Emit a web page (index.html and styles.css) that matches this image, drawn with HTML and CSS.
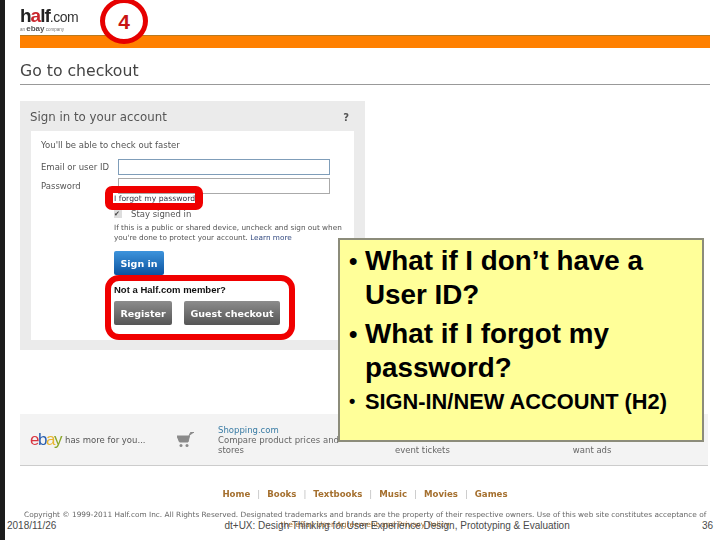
FILE: index.html
```html
<!DOCTYPE html>
<html lang="en">
<head>
  <meta charset="UTF-8">
  <title>Go to checkout</title>
  <link rel="stylesheet" href="styles.css">
</head>
<body>
  <div class="slide">
    <div class="page">
      <div class="logo">
        <div class="logo-name"><b>h<span class="logo-a">a</span>lf</b>.com</div>
        <div class="logo-sub">an <b>ebay</b> company</div>
      </div>
      <div class="orange-bar"></div>
      <h1>Go to checkout</h1>

      <div class="panel">
        <div class="panel-head">
          <span>Sign in to your account</span>
          <span class="help">?</span>
        </div>
        <div class="panel-body">
          <p class="intro">You'll be able to check out faster</p>
          <div class="field">
            <label>Email or user ID</label>
            <div class="input"></div>
          </div>
          <div class="field field-pass">
            <label>Password</label>
            <div class="input input-pass"></div>
          </div>
          <div class="form-col">
            <a class="forgot">I forgot my password</a>
            <div class="stay"><span class="check">✔</span>Stay signed in</div>
            <p class="small">If this is a public or shared device, uncheck and sign out when you're done to protect your account. <a>Learn more</a></p>
            <button class="btn-blue">Sign in</button>
            <div class="member">Not a Half.com member?</div>
            <div class="btn-row">
              <button class="btn-grey btn-register">Register</button>
              <button class="btn-grey btn-guest">Guest checkout</button>
            </div>
          </div>
        </div>
      </div>

      <div class="band">
        <div class="ebay-logo"><span class="e">e</span><span class="b">b</span><span class="a">a</span><span class="y">y</span></div>
        <div class="band-more">has more for you...</div>
        <svg class="cart" width="18" height="16" viewBox="0 0 18 16">
          <path d="M0 4h12.500l-1.500 6H2.500zM12 4l1.500-3.500H17" fill="#8a8a8a" stroke="#8a8a8a" stroke-width="1"/>
          <circle cx="4" cy="13.500" r="1.500" fill="#8a8a8a"/>
          <circle cx="10" cy="13.500" r="1.500" fill="#8a8a8a"/>
        </svg>
        <div class="band-item">
          <a>Shopping.com</a><br>Compare product prices and<br>stores
        </div>
        <div class="band-item band-tickets">event tickets</div>
        <div class="band-item band-ads">want ads</div>
      </div>

      <div class="site-nav">
        <a>Home</a><i>|</i><a>Books</a><i>|</i><a>Textbooks</a><i>|</i><a>Music</a><i>|</i><a>Movies</a><i>|</i><a>Games</a>
      </div>
      <p class="copyright">Copyright © 1999-2011 Half.com Inc. All Rights Reserved. Designated trademarks and brands are the property of their respective owners. Use of this web site constitutes acceptance of</p>
      <p class="copyright-2">the eBay User Agreement and Privacy Policy</p>
    </div>

    <div class="edge"></div>

    <!-- slide annotations on top of the screenshot -->
    <div class="step">4</div>
    <div class="mark mark-forgot"></div>
    <div class="mark mark-member"></div>

    <div class="note">
      <ul>
        <li>What if I don’t have a User ID?</li>
        <li>What if I forgot my password?</li>
        <li class="note-small">SIGN-IN/NEW ACCOUNT (H2)</li>
      </ul>
    </div>

    <div class="slide-foot">
      <span>2018/11/26</span>
      <span class="foot-title">dt+UX: Design Thinking for User Experience Design, Prototyping &amp; Evaluation</span>
      <span>36</span>
    </div>
  </div>
</body>
</html>
```

FILE: styles.css
```css
html, body {
  margin: 0;
  padding: 0;
  background: #fff;
}

.slide {
  position: relative;
  width: 720px;
  height: 540px;
  overflow: hidden;
  font-family: 'Liberation Sans', sans-serif;
}

.edge {
  position: absolute;
  left: 0;
  top: 0;
  bottom: 0;
  width: 5px;
  background: #1c1c1c;
}

.page {
  padding: 7px 10px 0 20px;
  font-family: 'DejaVu Sans', sans-serif;
  color: #555;
  filter: blur(0.4px);
}

/* logo */
.logo {
  height: 28px;
  font-family: 'Liberation Sans', sans-serif;
}

.logo-name {
  font-size: 14px;
  line-height: 17px;
  letter-spacing: -0.5px;
  color: #333;
}

.logo-name b {
  font-size: 19px;
  letter-spacing: -1px;
  color: #222;
}

.logo-a {
  color: #c9252c;
}

.logo-sub {
  font-size: 4.500px;
  line-height: 6px;
  color: #777;
}

.logo-sub b {
  font-size: 8px;
  color: #555;
}

.orange-bar {
  height: 13px;
  background: #ff8000;
  border-top: 1px solid #b87a20;
  box-sizing: border-box;
}

h1 {
  margin: 0 0 16px;
  padding: 12px 0 3px;
  height: 21px;
  font-size: 15.700px;
  line-height: 21px;
  font-weight: normal;
  color: #444;
  border-bottom: 1px solid #999;
}

/* sign in panel */
.panel {
  width: 345px;
  height: 249px;
  box-sizing: border-box;
  padding: 0 11px 0 11px;
  background: #ebebeb;
}

.panel-head {
  display: flex;
  justify-content: space-between;
  align-items: center;
  height: 30px;
  padding-top: 2px;
  margin-left: -1px;
  box-sizing: border-box;
  font-size: 11.800px;
  color: #555;
}

.help {
  margin-right: 5px;
  font-size: 10px;
  font-weight: bold;
}

.panel-body {
  height: 209px;
  box-sizing: border-box;
  padding: 9px 10px;
  background: #fff;
  font-size: 8.500px;
}

.intro {
  margin: 0 0 9px;
  line-height: 10px;
}

.field {
  display: flex;
  align-items: center;
  gap: 9px;
  height: 16px;
  margin-bottom: 3px;
}

.field label {
  width: 68px;
}

.input {
  width: 210px;
  height: 14px;
  border: 1px solid #7f9db9;
  background: #fff;
}

.input-pass {
  border-color: #aaa;
}

.field-pass {
  margin-bottom: 0;
}

.form-col {
  margin-left: 73px;
  padding-top: 0;
}

.forgot {
  display: block;
  height: 12px;
  line-height: 9px;
  font-size: 7.700px;
  color: #334;
}

.stay {
  display: flex;
  align-items: center;
  height: 16px;
  font-size: 8.500px;
}

.check {
  width: 8px;
  height: 8px;
  margin-right: 9px;
  background: #ddd;
  font-size: 7px;
  line-height: 8px;
  color: #444;
}

.small {
  margin: 1px 0 9px;
  font-size: 7.300px;
  line-height: 9.500px;
  width: 240px;
  color: #555;
}

.small a {
  color: #334a80;
}

button {
  border: none;
  padding: 0;
  border-radius: 2px;
  color: #fff;
  font-family: 'DejaVu Sans', sans-serif;
  font-size: 9.500px;
  font-weight: bold;
}

.btn-blue {
  display: block;
  width: 50px;
  height: 24px;
  background: linear-gradient(#3d94dc, #0c53a0);
}

.member {
  margin-top: 9px;
  font-family: 'Liberation Sans', sans-serif;
  font-size: 9.500px;
  font-weight: bold;
  line-height: 11px;
  color: #111;
}

.btn-row {
  display: flex;
  gap: 12px;
  margin-top: 6px;
}

.btn-grey {
  height: 24px;
  background: linear-gradient(#8c8c8c, #555);
}

.btn-register {
  width: 58px;
}

.btn-guest {
  width: 96px;
}

/* ebay band */
.band {
  display: flex;
  align-items: center;
  width: 688px;
  height: 52px;
  margin-top: 64px;
  padding-left: 10px;
  background: #f3f3f3;
  border-bottom: 1px solid #ccc;
  font-size: 8.500px;
  box-sizing: border-box;
  line-height: 10px;
}

.ebay-logo {
  width: 35px;
  font-family: 'Liberation Sans', sans-serif;
  font-size: 17px;
  letter-spacing: -1.500px;
}

.ebay-logo .e { color: #d9343f; }
.ebay-logo .b { color: #2a5fb0; }
.ebay-logo .a { color: #e8b52f; }
.ebay-logo .y { color: #8aa62a; }

.band-more {
  width: 112px;
}

.cart {
  margin-right: 23px;
}

.band-item {
  color: #666;
  white-space: nowrap;
}

.band-item a {
  color: #3a7ca5;
}

.band-tickets {
  margin: 20px 0 0 56px;
}

.band-ads {
  margin: 20px 0 0 123px;
}

/* footer links */
.site-nav {
  display: flex;
  justify-content: center;
  gap: 7px;
  margin-top: 23px;
  font-size: 8.600px;
  font-weight: bold;
  line-height: 11px;
  color: #a5702f;
}

.site-nav i {
  font-style: normal;
  font-weight: normal;
  color: #bbb;
}

.copyright {
  margin: 10px 0 0 4px;
  font-size: 7.360px;
  line-height: 10px;
  white-space: nowrap;
  color: #666;
}

.copyright-2 {
  margin: 0;
  font-size: 7.600px;
  line-height: 10px;
  text-align: center;
  color: #a5702f;
}

/* annotations */
.step {
  position: absolute;
  left: 100px;
  top: -2px;
  width: 48px;
  height: 46px;
  box-sizing: border-box;
  border: 5px solid #e60000;
  border-radius: 50%;
  background: #fff;
  color: #c81414;
  font-size: 21px;
  font-weight: bold;
  line-height: 38px;
  text-align: center;
}

.mark {
  position: absolute;
  box-sizing: border-box;
  border-style: solid;
  border-color: #f00000;
}

.mark-forgot {
  left: 105px;
  top: 186px;
  width: 98px;
  height: 24px;
  border-width: 7px 8px;
  border-radius: 7px;
}

.mark-member {
  left: 105px;
  top: 275px;
  width: 190px;
  height: 65px;
  border-width: 6px;
  border-radius: 14px;
}

.note {
  position: absolute;
  left: 338px;
  top: 238px;
  width: 366px;
  height: 204px;
  box-sizing: border-box;
  padding: 4px 8px 0 25px;
  background: #ffff99;
  border: 2px solid #8c8c7a;
  color: #000;
  font-size: 27.800px;
  font-weight: bold;
  line-height: 33.500px;
}

.note ul {
  margin: 0;
  padding: 0;
  list-style: none;
}

.note li {
  position: relative;
  padding-bottom: 6px;
}

.note li::before {
  content: "•";
  position: absolute;
  left: -16px;
  font-size: 24px;
}

.note .note-small {
  padding: 0;
  margin-top: -2px;
  font-size: 21.800px;
  line-height: 27px;
}

.note .note-small::before {
  font-size: 18px;
}

.slide-foot {
  position: absolute;
  left: 7px;
  right: 7px;
  top: 520px;
  display: flex;
  justify-content: space-between;
  font-size: 10px;
  line-height: 12px;
  color: #4a4a4a;
}

.foot-title {
  margin-left: 36px;
}
```
